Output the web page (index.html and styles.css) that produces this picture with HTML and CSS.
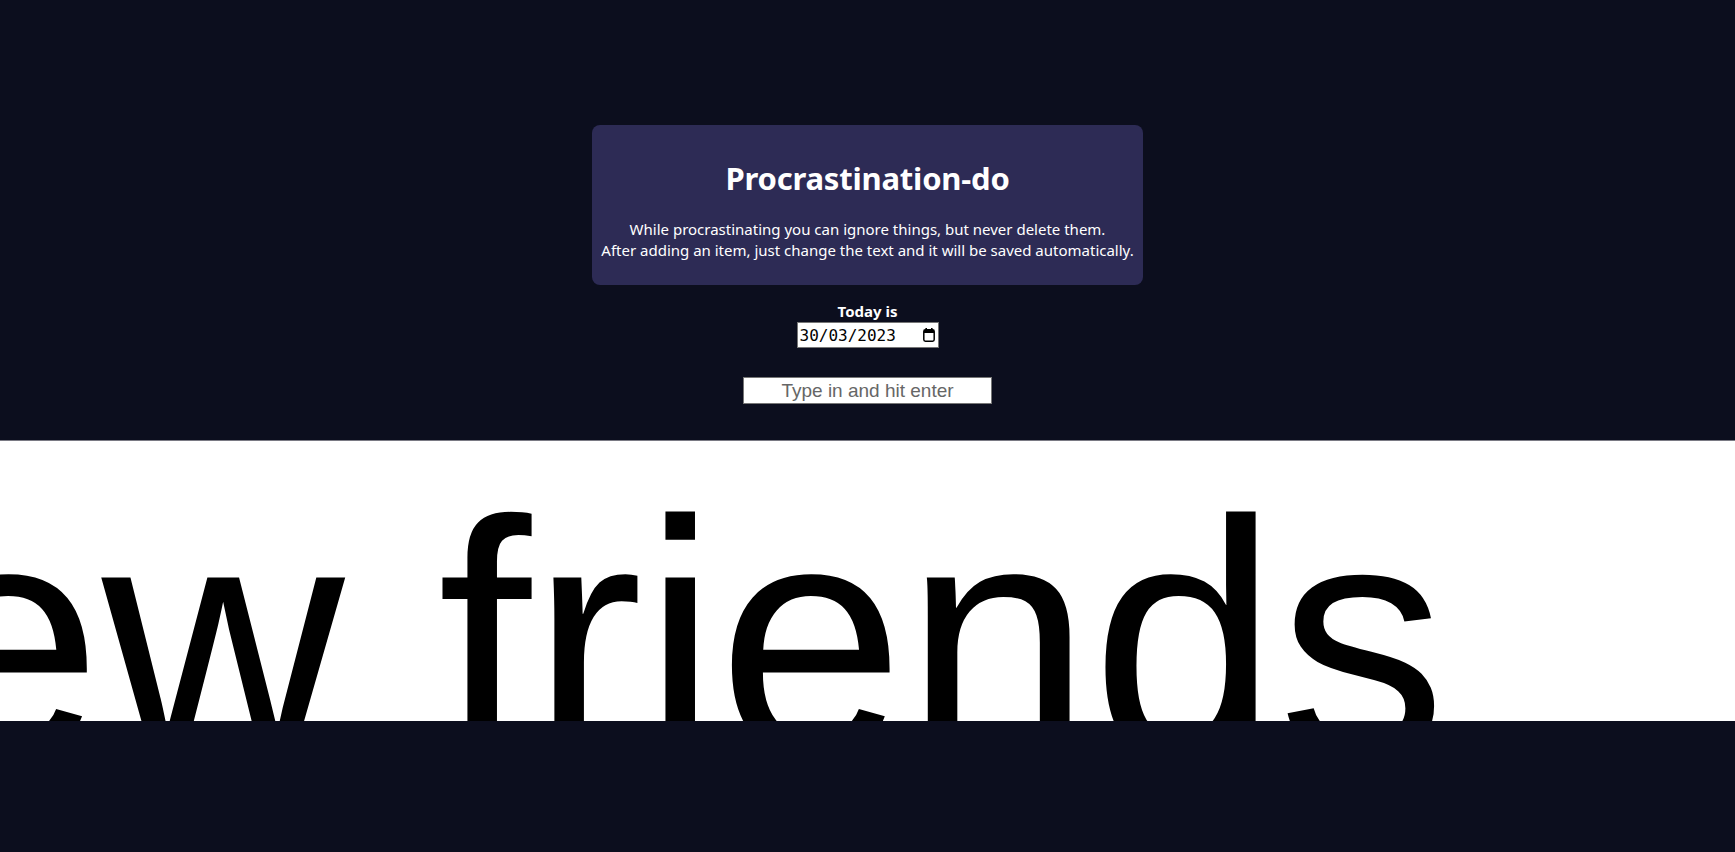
FILE: index.html
```html
<!DOCTYPE html>
<html lang="en">
<head>
<meta charset="utf-8">
<title>Procrastination-do</title>
<link rel="stylesheet" href="styles.css">
</head>
<body>
  <main class="page">
    <section class="card">
      <h1 class="title">Procrastination-do</h1>
      <p class="intro">While procrastinating you can ignore things, but never delete them.<br>After adding an item, just change the text and it will be saved automatically.</p>
    </section>
    <div class="today">
      <div class="today-label">Today is</div>
      <div class="date-field">
        <span class="date-value">30/03/2023</span>
        <svg class="cal-icon" width="12" height="14" viewBox="0 0 12 14" aria-hidden="true">
          <rect x="2.4" y="0" width="1.6" height="2.5" fill="#000"/>
          <rect x="8" y="0" width="1.6" height="2.5" fill="#000"/>
          <rect x="0.8" y="1.8" width="10.4" height="11.4" rx="1.6" ry="1.6" fill="none" stroke="#000" stroke-width="1.5"/>
          <rect x="1" y="2" width="10" height="3" fill="#000"/>
        </svg>
      </div>
    </div>
    <input class="new-item" type="text" placeholder="Type in and hit enter">
  </main>
  <div class="item">
    <span class="item-text">new friends</span>
  </div>
</body>
</html>
```
FILE: styles.css
```css
html, body {
  margin: 0;
  padding: 0;
}

body {
  background: #0c0e1e;
  min-height: 100vh;
  font-family: "Noto Sans", "Open Sans", sans-serif;
  color: #ffffff;
}

.page {
  display: flex;
  flex-direction: column;
  align-items: center;
  padding-top: 125px;
}

.card {
  box-sizing: border-box;
  width: 551px;
  height: 160px;
  background: #2d2b55;
  border-radius: 8px;
  padding: 33px 0 0;
  text-align: center;
}

.title {
  margin: 0;
  font-size: 31px;
  line-height: 40px;
  font-weight: 700;
  color: #ffffff;
  letter-spacing: -0.2px;
}

.intro {
  margin: 21px 0 0;
  font-size: 15px;
  line-height: 21px;
  color: #ffffff;
}

.today {
  margin-top: 16px;
  display: flex;
  flex-direction: column;
  align-items: center;
}

.today-label {
  font-size: 15px;
  line-height: 20px;
  font-weight: 700;
}

.date-field {
  box-sizing: border-box;
  margin-top: 1px;
  width: 142px;
  height: 26px;
  background: #ffffff;
  border: 1px solid #767676;
  display: flex;
  align-items: center;
  justify-content: space-between;
  padding: 0 3px 0 2px;
}

.date-value {
  font-family: "DejaVu Sans Mono", "Liberation Mono", monospace;
  font-size: 16px;
  color: #000000;
  letter-spacing: 0;
}

.cal-icon {
  display: block;
}

.new-item {
  box-sizing: border-box;
  margin: 29px 0 0;
  width: 249px;
  height: 27px;
  border: 1px solid #767676;
  border-radius: 0;
  padding: 1px 2px;
  background: #ffffff;
  font-family: "Liberation Sans", Arial, sans-serif;
  font-size: 19px;
  text-align: center;
  color: #000000;
  outline: none;
}

.new-item::placeholder {
  color: #666666;
  opacity: 1;
}

.item {
  box-sizing: border-box;
  margin-top: 36px;
  height: 281px;
  background: #ffffff;
  border-top: 1px solid #7a7a84;
  overflow: hidden;
  padding-top: 30px;
  white-space: nowrap;
}

.item-text {
  display: block;
  margin-left: -272px;
  font-family: "Liberation Sans", Arial, sans-serif;
  font-size: 336px;
  line-height: 336px;
  color: #000000;
}
```
